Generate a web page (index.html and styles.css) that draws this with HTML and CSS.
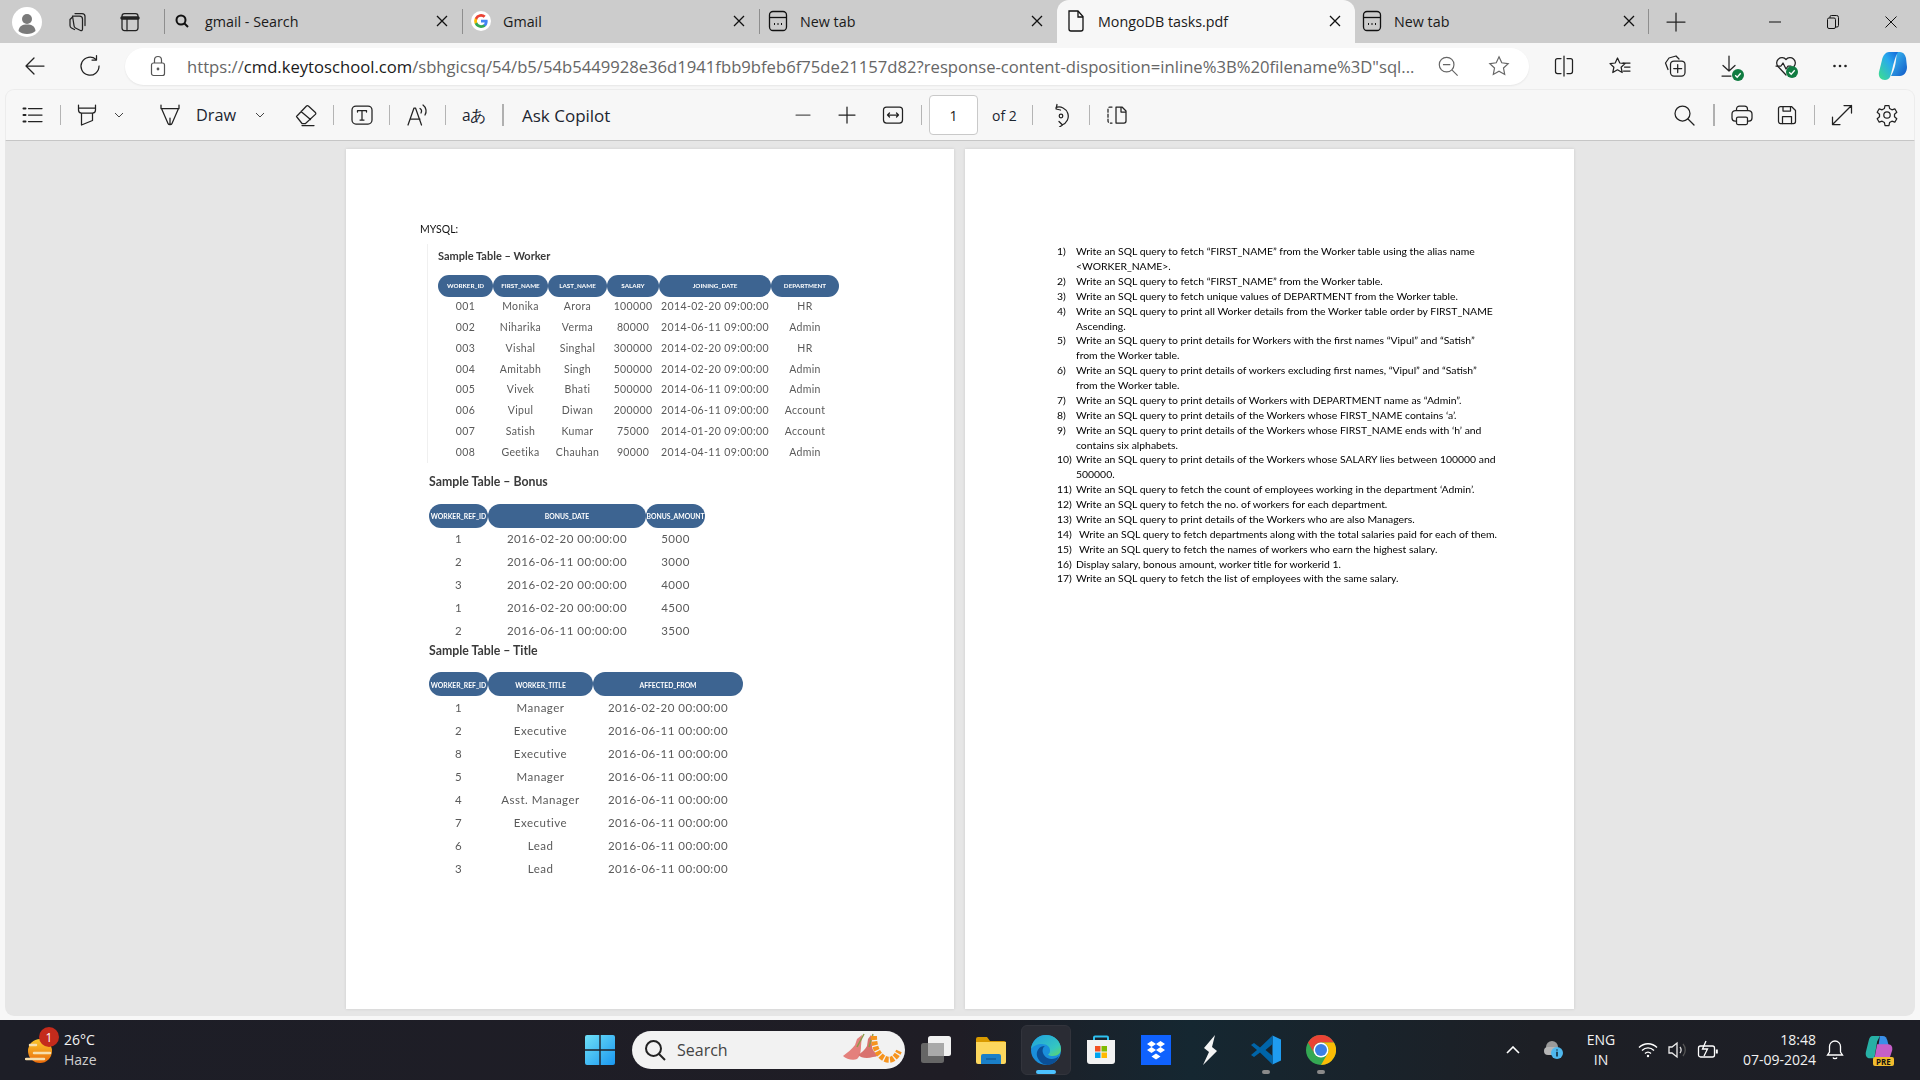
FILE: index.html
```html
<!DOCTYPE html>
<html lang="en">
<head>
<meta charset="utf-8">
<title>MongoDB tasks.pdf</title>
<link rel="stylesheet" href="styles.css">
</head>
<body>
<div class="app">

<header class="tabstrip">
  <div class="cell"><span class="avatar"><svg width="30" height="30" viewBox="0 0 30 30"><circle cx="15" cy="15" r="15" fill="#fff"/><circle cx="15" cy="12" r="5" fill="#7a7a7a"/><path d="M6.500 24c.6-5 3.500-6.500 8.500-6.500s7.900 1.500 8.500 6.500c-2 2-5 3-8.500 3s-6.500-1-8.500-3z" fill="#7a7a7a"/></svg></span></div>
  <div class="cell"><svg class="ic" viewBox="0 0 24 24"><path d="M9 3.500h7a3 3 0 0 1 3 3v9" /><path d="M6.500 6h7a3 3 0 0 1 3 3v10c0 1.500-1 2-2 1.500l-5-2.500a3 3 0 0 1-1.500-2.500z"/><path d="M6 7.500 4 9.500v6c0 1 .5 2 1.500 2.500l3 1.500"/></svg></div>
  <div class="cell"><svg class="ic" viewBox="0 0 24 24"><rect x="4" y="3.500" width="16" height="17" rx="2.500"/><path d="M4 8h16" stroke-width="3.500"/><path d="M9 8.500v12"/></svg></div>
  <div class="tab"><svg class="tab-ic tab-ic-search" viewBox="0 0 16 16"><circle cx="7" cy="7" r="4.500" fill="none" stroke="#111" stroke-width="2"/><path d="m10.500 10.500 3.500 3.500" stroke="#111" stroke-width="2"/></svg><span class="tab-title">gmail - Search</span><svg class="tab-x" viewBox="0 0 12 12"><path d="M1 1l10 10M11 1 1 11"/></svg></div>
  <div class="tab"><svg class="tab-ic" viewBox="0 0 24 24"><circle cx="12" cy="12" r="12" fill="#fff"/><path d="M20 12.200c0-.6-.1-1.200-.2-1.700H12v3.300h4.500a3.900 3.900 0 0 1-1.700 2.500v2.100h2.700c1.600-1.500 2.500-3.600 2.500-6.200z" fill="#4285f4"/><path d="M12 20.300c2.200 0 4.100-.7 5.500-2l-2.700-2.100c-.7.500-1.700.8-2.800.8-2.200 0-4-1.500-4.600-3.400H4.600v2.100a8.300 8.300 0 0 0 7.400 4.600z" fill="#34a853"/><path d="M7.400 13.600a5 5 0 0 1 0-3.200V8.300H4.600a8.300 8.300 0 0 0 0 7.400z" fill="#fbbc05"/><path d="M12 7c1.200 0 2.300.4 3.200 1.200l2.400-2.400A8.300 8.300 0 0 0 4.600 8.300l2.800 2.100C8 8.500 9.800 7 12 7z" fill="#ea4335"/></svg><span class="tab-title">Gmail</span><svg class="tab-x" viewBox="0 0 12 12"><path d="M1 1l10 10M11 1 1 11"/></svg></div>
  <div class="tab"><svg class="tab-ic tab-ic-line" viewBox="0 0 20 24"><rect x="1.500" y="2.500" width="17" height="19" rx="3.500"/><path d="M1.500 8.500h17"/><path d="M6 15h1M9.500 15h1M13 15h1" stroke-width="2"/></svg><span class="tab-title">New tab</span><svg class="tab-x" viewBox="0 0 12 12"><path d="M1 1l10 10M11 1 1 11"/></svg></div>
  <div class="tab tab-active"><svg class="tab-ic tab-ic-line" viewBox="0 0 20 24"><path d="M3 2h9l5 5.500V20a2 2 0 0 1-2 2H5a2 2 0 0 1-2-2z"/><path d="M12 2v6h5"/></svg><span class="tab-title">MongoDB tasks.pdf</span><svg class="tab-x" viewBox="0 0 12 12"><path d="M1 1l10 10M11 1 1 11"/></svg></div>
  <div class="tab tab-last"><svg class="tab-ic tab-ic-line" viewBox="0 0 20 24"><rect x="1.500" y="2.500" width="17" height="19" rx="3.500"/><path d="M1.500 8.500h17"/><path d="M6 15h1M9.500 15h1M13 15h1" stroke-width="2"/></svg><span class="tab-title">New tab</span><svg class="tab-x" viewBox="0 0 12 12"><path d="M1 1l10 10M11 1 1 11"/></svg></div>
  <div></div>
  <div class="cell"><svg class="ic" viewBox="0 0 24 24"><path d="M12 3v18M3 12h18"/></svg></div>
  <div class="cell"><svg class="ic-win" viewBox="0 0 12 12"><path d="M0 6h12"/></svg></div>
  <div class="cell"><svg class="ic-win ic-win-max" viewBox="0 0 12 14"><rect x=".5" y="3" width="8" height="10.500" rx="1.500"/><path d="M3 3V1.800A1.300 1.300 0 0 1 4.300.5h5A2 2 0 0 1 11.500 2.500v8a1.500 1.500 0 0 1-1.500 1.500H8.500"/></svg></div>
  <div class="cell"><svg class="ic-win" viewBox="0 0 12 12"><path d="M.5.500l11 11M11.500.500l-11 11"/></svg></div>
</header>

<nav class="addressbar">
  <div class="cell"><svg class="ic" viewBox="0 0 24 24"><path d="M21 12H3.500M11 4l-8 8 8 8"/></svg></div>
  <div class="cell"><svg class="ic" viewBox="0 0 24 24"><path d="M18 5.500a9 9 0 1 0 3 6.500"/><path d="M18.500 1.500v4.500H14"/></svg></div>
  <div class="urlcell"><div class="urlbox">
    <svg class="lock" viewBox="0 0 16 22"><rect x="1.500" y="8" width="13" height="12.500" rx="2"/><path d="M4.500 8V5a3.500 3.500 0 0 1 7 0v3"/><circle cx="8" cy="14" r=".8" fill="#555"/></svg>
    <span class="url"><span class="url-dim">https://</span>cmd.keytoschool.com<span class="url-dim">/sbhgicsq/54/b5/54b5449928e36d1941fbb9bfeb6f75de21157d82?response-content-disposition=inline%3B%20filename%3D"sql...</span></span>
    <svg class="ic-url" viewBox="0 0 24 24"><circle cx="10.500" cy="10.500" r="8"/><path d="m16.500 16.500 6 6M6.500 10.500h8"/></svg>
    <svg class="ic-url ic-star" viewBox="0 0 24 24"><path d="m12 2 3 6.500 7 .9-5.100 4.800 1.300 7-6.200-3.500-6.200 3.500 1.300-7L2 9.400l7-.9z"/></svg>
  </div></div>
  <div class="cell"><svg class="ic" viewBox="0 0 24 24"><path d="M12 2v20M9 4.500H5.500a2 2 0 0 0-2 2v11a2 2 0 0 0 2 2H9M15 4.500h3.500a2 2 0 0 1 2 2v11a2 2 0 0 1-2 2H15"/></svg></div>
  <div class="cell"><svg class="ic" viewBox="0 0 24 24"><path d="m9.500 4 2.300 5 5.200.6-3.900 3.600 1.100 5.300-4.700-2.700-4.700 2.700 1.100-5.300L2 9.600 7.200 9zM15 9h7M16.500 13h5.500M15.500 17h6.500"/></svg></div>
  <div class="cell"><svg class="ic" viewBox="0 0 24 24"><path d="M5 15.500 2.500 9 6 4l7-2 3 3"/><rect x="7.500" y="7" width="14.500" height="15" rx="3.500"/><path d="M14.700 10.500v8M10.700 14.500h8"/></svg></div>
  <div class="cell cell-badge"><svg class="ic" viewBox="0 0 24 24"><path d="M11 2v15M5 11.500 11 17l6-5.500M4 22h9" /></svg><svg class="okbadge" viewBox="0 0 12 12"><circle cx="6" cy="6" r="6" fill="#107c41"/><path d="m3.200 6.200 2 2 3.500-4" fill="none" stroke="#fff" stroke-width="1.300"/></svg></div>
  <div class="cell cell-badge"><svg class="ic" viewBox="0 0 24 24"><path d="M12 21 4 12.500a5.300 5.300 0 0 1 8-7 5.300 5.300 0 0 1 8 7"/><path d="M2 12h5l2-3 3 6 2-3h3"/></svg><svg class="okbadge okbadge-high" viewBox="0 0 12 12"><circle cx="6" cy="6" r="6" fill="#107c41"/><path d="m3.200 6.200 2 2 3.500-4" fill="none" stroke="#fff" stroke-width="1.300"/></svg></div>
  <div class="cell"><svg class="ic" viewBox="0 0 24 24"><circle cx="6.500" cy="12" r="1.300" fill="#222" stroke="none"/><circle cx="12" cy="12" r="1.300" fill="#222" stroke="none"/><circle cx="17.500" cy="12" r="1.300" fill="#222" stroke="none"/></svg></div>
  <div class="cell"><svg class="logo-copilot" viewBox="0 0 30 30"><defs><linearGradient id="cpa" x1="0" y1="0" x2="1" y2="1"><stop offset="0" stop-color="#3ec6f5"/><stop offset="1" stop-color="#1158c7"/></linearGradient><linearGradient id="cpb" x1="0" y1="1" x2="1" y2="0"><stop offset="0" stop-color="#3ee08a"/><stop offset=".6" stop-color="#28a9ee"/><stop offset="1" stop-color="#1466d8"/></linearGradient></defs><path d="M19 1h3c3 0 5 2 6 6l1 9c0 5-3 9-7 9h-9l2-4c3-7 3-13 4-20z" fill="url(#cpa)"/><path d="M11 1h9l-2 4c-3 8-4 16-6 21-1 2-3 3-5 3-4 0-7-3-6-8l3-12C5 4 8 1 11 1z" fill="url(#cpb)"/></svg></div>
</nav>

<section class="pdfbar">
  <div class="cell"><svg class="ic" viewBox="0 0 24 24"><path d="M7.500 5.500H21M7.500 12H21M7.500 18.500H21"/><path d="M2.500 5.500h2M2.500 12h2M2.500 18.500h2" stroke-width="2"/></svg></div>
  <div class="cell"><i class="vsep"></i></div>
  <div class="cell"><svg class="ic" viewBox="0 0 24 24"><path d="M3.500 2v5a3 3 0 0 0 3 3h11a3 3 0 0 0 3-3V2M6.500 10v12l11-4.500V10M3.500 5h17"/></svg></div>
  <div class="cell"><svg class="ic-chev" viewBox="0 0 10 6"><path d="m1 1 4 4 4-4"/></svg></div>
  <div class="cell"><svg class="ic" viewBox="0 0 24 24"><path d="M3 2v3.500h18V2M3.500 5.500 10 20.500c.6 1.500 3.400 1.500 4 0l6.500-15M12 21v-6"/></svg></div>
  <div class="cell-text cell-draw">Draw</div>
  <div class="cell"><svg class="ic-chev" viewBox="0 0 10 6"><path d="m1 1 4 4 4-4"/></svg></div>
  <div class="cell"><svg class="ic" viewBox="0 0 24 24"><path d="M2.500 13.500 12.500 3a1.300 1.300 0 0 1 1.900 0l7 6.500a1.300 1.300 0 0 1 0 1.900L11.500 20.500H8zM7 8.500l9.500 8M8 22.500h12"/></svg></div>
  <div class="cell"><i class="vsep"></i></div>
  <div class="cell"><svg class="ic" viewBox="0 0 24 24"><rect x="2" y="3" width="20" height="18" rx="4"/><path d="M7.500 9V7.500h9V9M12 7.500V17M10 17h4"/></svg></div>
  <div class="cell"><i class="vsep"></i></div>
  <div class="cell"><svg class="ic" viewBox="0 0 24 24"><path d="m3 22 6-17h1.500l6 17M5 16h10M15 5.500c1.500 1 1.800 3 1 4.500M18 2c3.500 2.500 3.800 7 2 10"/></svg></div>
  <div class="cell"><i class="vsep"></i></div>
  <div class="cell-text cell-trans">aあ</div>
  <div class="cell"><i class="vsep vsep-strong"></i></div>
  <div class="cell-text cell-ask">Ask Copilot</div>
  <div class="cell"><svg class="ic ic-grey" viewBox="0 0 24 24"><path d="M5 12h14"/></svg></div>
  <div class="cell"><svg class="ic" viewBox="0 0 24 24"><path d="M12 4v16M4 12h16"/></svg></div>
  <div class="cell"><svg class="ic" viewBox="0 0 24 24"><rect x="2.500" y="4" width="19" height="16" rx="3"/><path d="M6.500 12h11M8.500 10l-2 2 2 2M15.500 10l2 2-2 2"/></svg></div>
  <div class="cell"><i class="vsep"></i></div>
  <div class="pagebox">1</div>
  <div class="cell-text cell-of">of 2</div>
  <div class="cell"><i class="vsep"></i></div>
  <div class="cell"><svg class="ic" viewBox="0 0 24 24"><path d="M7 4.500a9 9 0 1 1 6 17.500M8 1.500l-1 4.500 4.500 1M10 18.500l3.500 3.500-3 2"/><circle cx="12" cy="13" r="1.800"/></svg></div>
  <div class="cell"><i class="vsep"></i></div>
  <div class="cell"><svg class="ic" viewBox="0 0 24 24"><path d="M7 4H5a2 2 0 0 0-2 2v12a2 2 0 0 0 2 2h2" stroke-dasharray="3 2"/><path d="M11 4h6l4 4v10a2 2 0 0 1-2 2h-8zM16 4v5h5"/></svg></div>
  <div class="cell"><svg class="ic" viewBox="0 0 24 24"><circle cx="10.500" cy="10.500" r="7.500"/><path d="m16 16 6 6"/></svg></div>
  <div class="cell"><i class="vsep vsep-strong"></i></div>
  <div class="cell"><svg class="ic" viewBox="0 0 24 24"><path d="M6.500 7.500V6a3 3 0 0 1 3-3h5a3 3 0 0 1 3 3v1.500M6.500 18H5a3 3 0 0 1-3-3v-4a3.500 3.500 0 0 1 3.500-3.500h13A3.500 3.500 0 0 1 22 11v4a3 3 0 0 1-3 3h-1.500"/><rect x="6.500" y="14" width="11" height="7.500" rx="1.500"/></svg></div>
  <div class="cell"><svg class="ic" viewBox="0 0 24 24"><path d="M3.500 5.500a2 2 0 0 1 2-2h11l4 4v11a2 2 0 0 1-2 2h-13a2 2 0 0 1-2-2z"/><path d="M8 3.500V8h7.500V3.500M7.500 20.500v-7h9v7"/></svg></div>
  <div class="cell"><i class="vsep"></i></div>
  <div class="cell"><svg class="ic" viewBox="0 0 24 24"><path d="M14 2.500h7.500V10M21.500 2.500 2.500 21.500M2.500 14v7.500H10"/></svg></div>
  <div class="cell"><svg class="ic" viewBox="0 0 24 24"><circle cx="12" cy="12" r="3.200"/><path d="M10 2.500h4l.6 3 2.300 1.300 2.900-1 2 3.400-2.300 2v2.600l2.300 2-2 3.400-2.900-1-2.300 1.300-.6 3h-4l-.6-3-2.300-1.300-2.900 1-2-3.400 2.300-2v-2.600l-2.300-2 2-3.400 2.900 1 2.300-1.300z"/></svg></div>
</section>

<main class="viewer">
  <article class="page page-one">
    <p class="mysql">MYSQL:</p>
    <section class="worker">
      <h2 class="sample">Sample Table – Worker</h2>
      <div class="grid grid-worker">
        <b>WORKER_ID</b><b>FIRST_NAME</b><b>LAST_NAME</b><b>SALARY</b><b>JOINING_DATE</b><b>DEPARTMENT</b>
        <span>001</span><span>Monika</span><span>Arora</span><span>100000</span><span>2014-02-20 09:00:00</span><span>HR</span>
        <span>002</span><span>Niharika</span><span>Verma</span><span>80000</span><span>2014-06-11 09:00:00</span><span>Admin</span>
        <span>003</span><span>Vishal</span><span>Singhal</span><span>300000</span><span>2014-02-20 09:00:00</span><span>HR</span>
        <span>004</span><span>Amitabh</span><span>Singh</span><span>500000</span><span>2014-02-20 09:00:00</span><span>Admin</span>
        <span>005</span><span>Vivek</span><span>Bhati</span><span>500000</span><span>2014-06-11 09:00:00</span><span>Admin</span>
        <span>006</span><span>Vipul</span><span>Diwan</span><span>200000</span><span>2014-06-11 09:00:00</span><span>Account</span>
        <span>007</span><span>Satish</span><span>Kumar</span><span>75000</span><span>2014-01-20 09:00:00</span><span>Account</span>
        <span>008</span><span>Geetika</span><span>Chauhan</span><span>90000</span><span>2014-04-11 09:00:00</span><span>Admin</span>
      </div>
    </section>
    <section class="lower lower-bonus">
      <h2 class="sample">Sample Table – Bonus</h2>
      <div class="grid grid-big grid-bonus">
        <b>WORKER_REF_ID</b><b>BONUS_DATE</b><b>BONUS_AMOUNT</b>
        <span>1</span><span>2016-02-20 00:00:00</span><span>5000</span>
        <span>2</span><span>2016-06-11 00:00:00</span><span>3000</span>
        <span>3</span><span>2016-02-20 00:00:00</span><span>4000</span>
        <span>1</span><span>2016-02-20 00:00:00</span><span>4500</span>
        <span>2</span><span>2016-06-11 00:00:00</span><span>3500</span>
      </div>
    </section>
    <section class="lower lower-title">
      <h2 class="sample">Sample Table – Title</h2>
      <div class="grid grid-big grid-title">
        <b>WORKER_REF_ID</b><b>WORKER_TITLE</b><b>AFFECTED_FROM</b>
        <span>1</span><span>Manager</span><span>2016-02-20 00:00:00</span>
        <span>2</span><span>Executive</span><span>2016-06-11 00:00:00</span>
        <span>8</span><span>Executive</span><span>2016-06-11 00:00:00</span>
        <span>5</span><span>Manager</span><span>2016-06-11 00:00:00</span>
        <span>4</span><span>Asst. Manager</span><span>2016-06-11 00:00:00</span>
        <span>7</span><span>Executive</span><span>2016-06-11 00:00:00</span>
        <span>6</span><span>Lead</span><span>2016-06-11 00:00:00</span>
        <span>3</span><span>Lead</span><span>2016-06-11 00:00:00</span>
      </div>
    </section>
  </article>
  <article class="page page-two">
    <div class="q"><span>1)</span><p>Write an SQL query to fetch “FIRST_NAME” from the Worker table using the alias name<br>&lt;WORKER_NAME&gt;.</p></div>
    <div class="q"><span>2)</span><p>Write an SQL query to fetch “FIRST_NAME” from the Worker table.</p></div>
    <div class="q"><span>3)</span><p>Write an SQL query to fetch unique values of DEPARTMENT from the Worker table.</p></div>
    <div class="q"><span>4)</span><p>Write an SQL query to print all Worker details from the Worker table order by FIRST_NAME<br>Ascending.</p></div>
    <div class="q"><span>5)</span><p>Write an SQL query to print details for Workers with the first names “Vipul” and “Satish”<br>from the Worker table.</p></div>
    <div class="q"><span>6)</span><p>Write an SQL query to print details of workers excluding first names, “Vipul” and “Satish”<br>from the Worker table.</p></div>
    <div class="q"><span>7)</span><p>Write an SQL query to print details of Workers with DEPARTMENT name as “Admin”.</p></div>
    <div class="q"><span>8)</span><p>Write an SQL query to print details of the Workers whose FIRST_NAME contains ‘a’.</p></div>
    <div class="q"><span>9)</span><p>Write an SQL query to print details of the Workers whose FIRST_NAME ends with ‘h’ and<br>contains six alphabets.</p></div>
    <div class="q"><span>10)</span><p>Write an SQL query to print details of the Workers whose SALARY lies between 100000 and<br>500000.</p></div>
    <div class="q"><span>11)</span><p>Write an SQL query to fetch the count of employees working in the department ‘Admin’.</p></div>
    <div class="q"><span>12)</span><p>Write an SQL query to fetch the no. of workers for each department.</p></div>
    <div class="q"><span>13)</span><p>Write an SQL query to print details of the Workers who are also Managers.</p></div>
    <div class="q q-in"><span>14)</span><p>Write an SQL query to fetch departments along with the total salaries paid for each of them.</p></div>
    <div class="q q-in"><span>15)</span><p>Write an SQL query to fetch the names of workers who earn the highest salary.</p></div>
    <div class="q"><span>16)</span><p>Display salary, bonous amount, worker title for workerid 1.</p></div>
    <div class="q"><span>17)</span><p>Write an SQL query to fetch the list of employees with the same salary.</p></div>
  </article>
</main>

<footer class="taskbar">
  <div class="weather">
    <svg class="weather-ic" viewBox="0 0 32 28"><defs><linearGradient id="sun" x1="0" y1="0" x2="0" y2="1"><stop offset="0" stop-color="#fbc72d"/><stop offset="1" stop-color="#ea6a0a"/></linearGradient></defs><circle cx="15" cy="14" r="12" fill="url(#sun)"/><path d="M5 8h6M9 16h16M1 22h18" stroke="#f6dfae" stroke-width="2.500" stroke-linecap="round"/></svg>
    <span class="badge">1</span>
    <div class="weather-text"><span>26°C</span><span class="haze">Haze</span></div>
  </div>
  <div class="tb-center">
    <svg class="winlogo" viewBox="0 0 30 30"><defs><linearGradient id="win" x1="0" y1="0" x2="1" y2="1"><stop offset="0" stop-color="#6fe0f7"/><stop offset="1" stop-color="#1a97f0"/></linearGradient></defs><path d="M0 2a2 2 0 0 1 2-2h12.300v14.300H0zM15.700 0H28a2 2 0 0 1 2 2v12.300H15.700zM0 15.700h14.300V30H2a2 2 0 0 1-2-2zM15.700 15.700H30V28a2 2 0 0 1-2 2H15.700z" fill="url(#win)"/></svg>
    <div class="tb-search">
      <svg class="tb-search-ic" viewBox="0 0 24 24"><circle cx="10.500" cy="10.500" r="7.500"/><path d="m16 16 6 6"/></svg>
      <span>Search</span>
      <svg class="tb-art" viewBox="0 0 68 38"><path d="M25 4 20 8l-2 6c-3 4-8 8-12 11 3 3 10 5 14 3 3-2 4-8 4-13z" fill="#e4807c"/><path d="M34 4l-3 4-1 7c-2 4-6 7-9 9 3 3 9 4 15 2 3 0 4-1 5-2-3-2-6-5-6-9z" fill="#d9726e"/><path d="M27 3l-7 13M36 3l-4 13" stroke="#8b9a4b" stroke-width="1.500" fill="none"/><path d="M37 5c0 8 2 16 8 21 5 4 12 5 17-6" fill="none" stroke="#f6941e" stroke-width="6" stroke-dasharray="4 1.300"/></svg>
    </div>
    <div class="tb-slots">
      <div class="tb-slot"><svg class="tb-app" viewBox="0 0 30 30"><rect x="0" y="8" width="23" height="20" rx="2.500" fill="#666"/><rect x="7" y="1" width="23" height="20" rx="2.500" fill="#f1f1f1"/><rect x="7" y="8" width="16" height="13" fill="#a9a9a9"/></svg></div>
      <div class="tb-slot"><svg class="tb-app" viewBox="0 0 30 30"><path d="M0 4a2 2 0 0 1 2-2h9l3 4h14a2 2 0 0 1 2 2v3H0z" fill="#d99a00"/><path d="M0 7h30v20a2 2 0 0 1-2 2H2a2 2 0 0 1-2-2z" fill="#fcd75e"/><path d="M5 21a2 2 0 0 1 2-2h16a2 2 0 0 1 2 2v8H5z" fill="#1a7fc8"/><path d="M10 24h10" stroke="#0d4f86" stroke-width="1"/></svg></div>
      <div class="tb-slot tb-active"><svg class="tb-app" viewBox="0 0 30 30"><defs><linearGradient id="eg" x1="0" y1="0" x2="1" y2="1"><stop offset="0" stop-color="#1f9fe0"/><stop offset=".7" stop-color="#35c6c0"/><stop offset="1" stop-color="#63d85e"/></linearGradient></defs><circle cx="15" cy="15" r="15" fill="#1a8fdc"/><path d="M28 21c-4 4-12 4-15-1-2-3-2-7 1-9-6 0-9 5-8 10 1 4 5 9 11 9 5 0 9-4 11-9z" fill="#0b4f96"/><path d="M0 14C1 6 7 0 15 0c8 0 15 6 15 14 0 4-3 7-8 7-2 0-4-.5-5-1.500 2-1 2-3 2-4.500 0-3-3-6-8-6-5 0-9 2-11 5z" fill="url(#eg)"/></svg><i class="tb-pill"></i></div>
      <div class="tb-slot"><svg class="tb-app" viewBox="0 0 30 30"><path d="M8 5V2.500a1 1 0 0 1 1-1h12a1 1 0 0 1 1 1V5" fill="none" stroke="#2ec1f0" stroke-width="2"/><path d="M1 5h28v21a3 3 0 0 1-3 3H4a3 3 0 0 1-3-3z" fill="#f2f2f2"/><rect x="9" y="11" width="5.500" height="5.500" fill="#f25022"/><rect x="15.500" y="11" width="5.500" height="5.500" fill="#7fba00"/><rect x="9" y="17.500" width="5.500" height="5.500" fill="#00a4ef"/><rect x="15.500" y="17.500" width="5.500" height="5.500" fill="#ffb900"/></svg></div>
      <div class="tb-slot"><svg class="tb-app" viewBox="0 0 30 30"><rect width="30" height="30" fill="#0f62fe"/><path d="m10.500 6 4.500 3-4.500 3L6 9zM19.500 6 24 9l-4.500 3L15 9zM10.500 12l4.500 3-4.500 3L6 15zM19.500 12l4.500 3-4.500 3-4.500-3zM15 18.500l4.500 3-4.500 3-4.500-3z" fill="#fff"/></svg></div>
      <div class="tb-slot"><svg class="tb-app" viewBox="0 0 30 30"><path d="M19 0 8 13l5 4-6 13 14-14-5-4z" fill="#f4f4f4"/></svg></div>
      <div class="tb-slot"><svg class="tb-app" viewBox="0 0 30 30"><path d="M21.500.5 30 4.500v21l-8.500 4z" fill="#1f9cf0"/><path d="M21.500.5 9 12.500 3 8 0 10l6 5-6 5 3 2 6-4.500L21.500 29.500V21l-7-6 7-6z" fill="#0065a9"/></svg><i class="tb-dot"></i></div>
      <div class="tb-slot"><svg class="tb-app" viewBox="0 0 30 30"><circle cx="15" cy="15" r="15" fill="#34a853"/><path d="M2 7.500A15 15 0 0 1 28 7.500H15a7.500 7.500 0 0 0-6.500 11.250z" fill="#ea4335"/><path d="M28 7.500A15 15 0 0 1 15 30l6.500-11.250A7.500 7.500 0 0 0 15 7.500z" fill="#fbbc05"/><circle cx="15" cy="15" r="7.500" fill="#fff"/><circle cx="15" cy="15" r="6" fill="#3b7fe6"/></svg><i class="tb-dot"></i></div>
    </div>
  </div>
  <div class="tray">
    <svg class="tr-chev" viewBox="0 0 14 8"><path d="m1 7 6-6 6 6"/></svg>
    <svg class="tr-cloud" viewBox="0 0 20 22"><circle cx="9" cy="8" r="6" fill="#9a9a9a"/><rect x="1" y="8" width="14" height="8" rx="4" fill="#b5b5b5"/><circle cx="14" cy="14" r="6" fill="#4fb8ee"/><path d="M14 10.500v1M14 12.800V17.500" stroke="#10202e" stroke-width="1.500"/></svg>
    <div class="tr-lang"><span>ENG</span><span>IN</span></div>
    <svg class="tr-wifi" viewBox="0 0 20 16"><path d="M1 5.500c5-5 13-5 18 0M4 8.500c3.500-3.500 8.500-3.500 12 0M7 11.500c1.800-1.800 4.200-1.800 6 0"/><circle cx="10" cy="14" r="1.200" fill="#fff" stroke="none"/></svg>
    <svg class="tr-vol" viewBox="0 0 20 18"><path d="M1 6v6h3l5 4V2L4 6z"/><path d="M12 6c1.500 2 1.500 4 0 6" stroke="#ddd"/><path d="M15 3c3 3.500 3 8.500 0 12" stroke="#555"/></svg>
    <svg class="tr-bat" viewBox="0 0 22 20"><rect x="1.500" y="6" width="16" height="11" rx="2"/><path d="M19.800 9.500v4" stroke-width="2"/><path d="M9 1 5.500 9h5L7 16" /></svg>
    <div class="tr-clock"><span>18:48</span><span>07-09-2024</span></div>
    <svg class="tr-bell" viewBox="0 0 18 20"><path d="M9 1a5.500 5.500 0 0 0-5.500 5.500V12L1.500 15h15l-2-3V6.500A5.500 5.500 0 0 0 9 1zM7 17.500c.5 1.500 3.500 1.500 4 0"/></svg>
    <div class="tr-pre"><svg class="tr-pre-logo" viewBox="0 0 30 30"><path d="M8 1h8l-3 6-3 18H5C2 25 0 22 1 18L4 6c.5-3 2-5 4-5z" fill="#27b0a5"/><path d="M16 1h3c3 0 4 2 5 5l2 8H14z" fill="#3a8fe8"/><path d="M13 10h12c3 0 5 3 4 7l-3 9H10z" fill="#c55fc8"/></svg><span>PRE</span></div>
  </div>
</footer>

</div>
</body>
</html>
```

FILE: styles.css
```css
* { box-sizing: border-box; }
html, body { margin: 0; padding: 0; }
body { font-family: "Open Sans", "Noto Sans", sans-serif; color: #1a1a1a; background: #f7f7f7; overflow: hidden; }
.app { width: 1920px; height: 1080px; display: flex; flex-direction: column; }
svg { display: block; flex: none; }

/* Every bar is a grid whose tracks run from one item's left edge to the next. */
.cell { display: flex; align-items: center; justify-content: flex-start; min-width: 0; }
.ic { width: 24px; height: 24px; fill: none; stroke: #222; stroke-width: 1.250; stroke-linejoin: round; stroke-linecap: round; }
.ic-grey { stroke: #555; }
.ic-chev { width: 10px; height: 6px; margin-left: 7px; fill: none; stroke: #444; stroke-width: 1; }
.ic-win { width: 12px; height: 12px; fill: none; stroke: #111; stroke-width: 1; }
.ic-win-max { height: 14px; }
.vsep { display: block; width: 1px; height: 20px; margin-left: 12px; background: #b4b4b4; }
.vsep-strong { background: #b0b0b0; height: 22px; width: 2px; }

/* tab strip */
.tabstrip { height: 43px; background: #cccccc; display: grid; align-items: center; padding-left: 12px;
  grid-template-columns: 54px 52px 46px 298px 297px 298px 298px 294px 15px 105px 58px 58px 35px; }
.tabstrip > .cell { height: 43px; }
.avatar { display: block; width: 30px; height: 30px; }
.tab { height: 43px; display: flex; align-items: center; padding-left: 9px; padding-bottom: 1px; position: relative; }
.tab::before { content: ""; position: absolute; left: 0; top: 9px; height: 25px; width: 1px; background: #8e8e8e; }
.tab-ic { width: 20px; height: 20px; margin-right: 12px; }
.tab-ic-search { width: 16px; height: 16px; margin-left: 1px; margin-right: 15px; }
.tab-ic-line { height: 24px; fill: none; stroke: #111; stroke-width: 1.300; }
.tab-title { font-size: 14.300px; flex: 1; white-space: nowrap; color: #1a1a1a; }
.tab-x { width: 12px; height: 12px; margin-right: 14px; fill: none; stroke: #111; stroke-width: 1.300; }
.tab-active { background: #f7f7f7; border-radius: 12px 12px 0 0; }
.tab-active::before { display: none; }
.tab-last { padding-left: 7px; }
.tab-last::before { display: none; }
.tab-last::after { content: ""; position: absolute; right: 0; top: 9px; height: 25px; width: 1px; background: #8e8e8e; }

/* address bar */
.addressbar { height: 46px; display: grid; align-items: center; padding-left: 23px;
  grid-template-columns: 55px 47px 1427px 56px 55px 55px 56px 54px 50px 42px; }
.addressbar > .cell { height: 46px; }
.urlbox { width: 1404px; height: 37px; background: #fff; border-radius: 19px; display: flex; align-items: center; padding-left: 25px; box-shadow: 0 1px 2px rgba(0,0,0,.07); }
.lock { width: 16px; height: 22px; fill: none; stroke: #555; stroke-width: 1.200; margin-right: 21px; }
.url { font-size: 16.650px; white-space: nowrap; color: #1a1a1a; width: 1250px; overflow: hidden; }
.url-dim { color: #666; }
.ic-url { width: 22px; height: 22px; fill: none; stroke: #666; stroke-width: 1.300; }
.ic-star { margin-left: 29px; }
.cell-badge { position: relative; }
.okbadge { position: absolute; width: 12px; height: 12px; left: 14px; top: 26px; }
.okbadge-high { left: 12px; top: 23px; }
.logo-copilot { width: 30px; height: 30px; }

/* pdf toolbar */
.pdfbar { height: 52px; margin: 0 5px; display: grid; align-items: center; padding-left: 15px; background: #f7f7f7; border: 1px solid #ececec; border-bottom-color: #c6c6c6; border-radius: 9px 9px 0 0;
  grid-template-columns: 27px 27px 32px 51px 38px 52px 46px 27px 29px 27px 28px 28px 29px 28px 32px 269px 44px 46px 28px 20px 63px 28px 29px 28px 28px 567px 29px 29px 45px 27px 28px 45px 36px; }
.pdfbar > .cell { height: 50px; }
.cell-text { white-space: nowrap; color: #1c2530; }
.cell-draw { font-size: 16.300px; }
.cell-ask { font-size: 17px; }
.cell-trans { font-size: 15.500px; letter-spacing: -.5px; }
.pagebox { width: 49px; height: 40px; background: #fff; border: 1px solid #c9c9c9; border-radius: 4px; font-size: 14px; display: flex; align-items: center; justify-content: center; }
.cell-of { font-size: 14px; }

/* viewer */
.viewer { height: 875px; margin: 0 5px; background: #e6e6e6; border-radius: 0 0 9px 9px; display: flex; justify-content: center; gap: 11px; padding: 8px 0 0 0; }
.page { height: 860px; background: #fff; box-shadow: 0 0 3px rgba(0,0,0,.12); }
.page-one { width: 608px; padding: 72px 0 0 74px; font-family: Lato, sans-serif; filter: blur(.25px); }
.page-two { width: 609px; padding: 95.200px 0 0 92px; font: 10.400px/14.870px "Lato", sans-serif; color: #000; filter: blur(.2px); }
.mysql { margin: 0; font: 10.500px/16px "Lato", sans-serif; color: #111; }
.worker { margin: 7px 0 0 7px; padding-left: 10px; border-left: 1px solid #f0f0f0; }
.sample { margin: 0; font: 700 11px/24px "Lato", sans-serif; color: #3a3a3a; }
.worker .sample { margin-bottom: 7px; }
.grid { display: grid; justify-items: stretch; }
.grid b { background: #3d6491; color: #fff; border-radius: 12px; font: 700 6.300px/1 "Lato", sans-serif; display: flex; align-items: center; justify-content: center; white-space: nowrap; padding-top: 1px; }
.grid span { display: flex; align-items: center; justify-content: center; font-size: 10.500px; letter-spacing: .36px; color: #5a5a5a; white-space: nowrap; padding-bottom: 2px; }
.grid-worker { grid-template-columns: 55px 55px 59px 52px 112px 68px; grid-template-rows: 22px repeat(8, 20.750px); width: 401px; }
.lower { margin-left: 9px; }
.lower .sample { font-size: 12.300px; line-height: 16px; }
.lower-bonus { margin-top: 11px; }
.lower-bonus .sample { margin-bottom: 14px; }
.lower-title .sample { margin-bottom: 13px; }
.grid-big { grid-template-rows: 24px; grid-auto-rows: 23.100px; }
.grid-big b { font-size: 6.800px; }
.grid-big span { font-size: 11.500px; letter-spacing: .5px; }
.grid-bonus { grid-template-columns: 59px 158px 59px; width: 276px; }
.grid-title { grid-template-columns: 59px 105px 150px; width: 314px; }
.q { display: flex; }
.q span { width: 19px; flex: none; }
.q p { margin: 0; white-space: nowrap; }
.q-in span { width: 22px; }

/* taskbar */
.taskbar { height: 60px; margin-top: 4px; background: linear-gradient(90deg, #1d1e27 0%, #1f1d25 50%, #152731 62%, #1d1f25 80%, #1d1e26 100%); display: grid; grid-template-columns: 560px 1fr auto; align-items: center; color: #f2f2f2; }
.weather { display: flex; align-items: center; padding-left: 25px; position: relative; height: 60px; }
.weather-ic { width: 32px; height: 28px; margin-top: 1px; }
.badge { position: absolute; left: 39px; top: 7px; width: 20px; height: 20px; border-radius: 50%; background: #c42b1c; color: #fff; font-size: 12px; display: flex; align-items: center; justify-content: center; }
.weather-text { display: flex; flex-direction: column; margin-left: 7px; font-size: 14px; line-height: 20px; }
.haze { color: #cfcfcf; }
.tb-center { display: flex; align-items: center; height: 60px; }
.winlogo { width: 30px; height: 30px; margin-left: 24.500px; }
.tb-search { width: 273px; height: 38px; margin-left: 17.500px; border-radius: 19px; background: #f2f2f2; color: #444; display: flex; align-items: center; padding-left: 11px; font-size: 16px; position: relative; }
.tb-search-ic { width: 24px; height: 24px; fill: none; stroke: #222; stroke-width: 2; margin-right: 10px; }
.tb-art { position: absolute; right: 0; top: 0; width: 68px; height: 38px; }
.tb-slots { display: flex; margin-left: 3.500px; }
.tb-slot { width: 55px; height: 50px; display: flex; align-items: center; justify-content: center; position: relative; }
.tb-app { width: 30px; height: 30px; position: relative; }
.tb-active::before { content: ""; position: absolute; top: 0; bottom: 0; left: 2.500px; right: 2.500px; background: #2a2c34; border-radius: 6px; border: 1px solid #32343c; }
.tb-pill { position: absolute; bottom: 1px; left: 17.500px; width: 20px; height: 4px; border-radius: 2px; background: #4cc2ff; }
.tb-dot { position: absolute; bottom: 1px; left: 23.500px; width: 8px; height: 4px; border-radius: 2px; background: #8a8a8a; }
.tray { display: flex; align-items: center; height: 60px; padding-right: 25px; font-size: 14px; }
.tr-chev { width: 14px; height: 8px; fill: none; stroke: #fff; stroke-width: 1.600; margin-right: 23px; }
.tr-cloud { width: 20px; height: 22px; margin-right: 21px; }
.tr-lang { display: flex; flex-direction: column; align-items: center; line-height: 20px; width: 34px; margin-right: 20px; }
.tr-wifi { width: 20px; height: 16px; fill: none; stroke: #fff; stroke-width: 1.400; margin-right: 10px; }
.tr-vol { width: 20px; height: 18px; fill: none; stroke: #eee; stroke-width: 1.300; margin-right: 9px; }
.tr-bat { width: 22px; height: 20px; fill: none; stroke: #fff; stroke-width: 1.300; margin-right: 19px; }
.tr-clock { display: flex; flex-direction: column; align-items: flex-end; line-height: 20px; width: 78px; }
.tr-bell { width: 18px; height: 20px; fill: none; stroke: #fff; stroke-width: 1.300; margin-left: 10px; margin-right: 21px; }
.tr-pre { width: 30px; height: 30px; position: relative; }
.tr-pre-logo { width: 28px; height: 28px; }
.tr-pre span { position: absolute; left: 8px; bottom: -1px; background: #f1bc2e; color: #111; font: 700 8px/9px "Open Sans", sans-serif; padding: 0 3px; border-radius: 2px; }
```
